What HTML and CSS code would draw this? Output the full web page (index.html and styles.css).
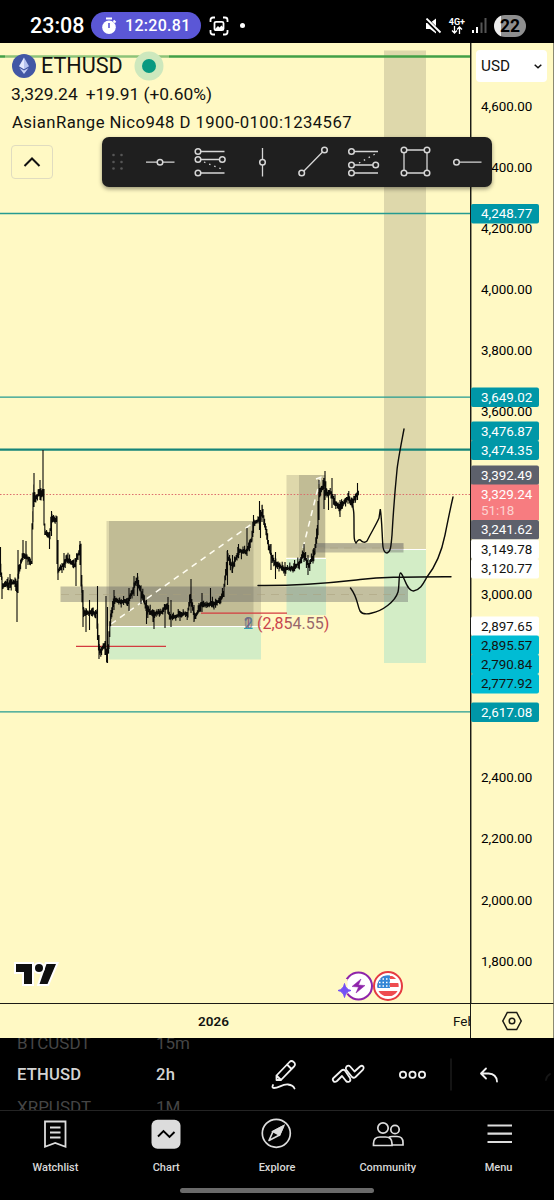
FILE: index.html
```html
<!DOCTYPE html>
<html lang="en">

<head>
  <meta charset="UTF-8">
  <meta name="viewport" content="width=device-width, initial-scale=1.0">
  <title>ETHUSD Chart</title>
  <link rel="stylesheet" href="styles.css">
</head>

<body>
  <div class="app">
    <header class="status">
      <span class="clock">23:08</span>
      <div class="timer">
        <svg width="16" height="18" viewBox="0 0 16 18">
          <circle cx="8" cy="10.3" r="6.8" fill="#fff" />
          <path d="M5 1.5h6M12.5 3.5l2 2" stroke="#fff" stroke-width="2" />
          <path d="M8 6v5" stroke="#5b57d6" stroke-width="1.6" />
        </svg>
        <span>12:20.81</span>
      </div>
      <svg class="shot" width="20" height="20" viewBox="0 0 20 20" fill="none" stroke="#fff" stroke-width="1.8">
        <path d="M1.5 6V4q0-2.500 2.500-2.500h2M14 1.500h2q2.500 0 2.500 2.500v2M18.500 14v2q0 2.500-2.500 2.500h-2M6 18.500H4q-2.500 0-2.500-2.500v-2" />
        <rect x="5.500" y="5.800" width="9" height="8.400" rx="1.500" />
        <path d="M6 13l3-3 1.500 1.500 2-2L14 11v3H6z" fill="#fff" stroke="none" />
      </svg>
      <i class="note"></i>
      <div class="signals">
        <svg width="17" height="16" viewBox="0 0 17 16">
          <path d="M1 5h4l6-4.500v15L5 11H1z" fill="#fff" />
          <path d="M1 1l14 14" stroke="#000" stroke-width="4" />
          <path d="M1.500 .5l14 14" stroke="#fff" stroke-width="1.800" />
        </svg>
        <div class="net">
          <span>4G+</span>
          <svg width="12" height="8" viewBox="0 0 12 8" fill="none" stroke="#fff" stroke-width="1.300">
            <path d="M3.500 0v6.500M1 4.500l2.500 2.500L6 4.500M8.500 8V1.500M6 3.500L8.500 1 11 3.500" />
          </svg>
        </div>
        <svg width="15" height="15" viewBox="0 0 15 15">
          <path d="M0 12h2v3H0zM4 9h2v6H4z" fill="#fff" />
          <path d="M8.500 4.500h2V15h-2zM12.500 0h2v15h-2z" fill="#555" />
        </svg>
        <span class="battery">22</span>
      </div>
    </header>

    <main class="chart">
      <svg class="pane" width="470" height="960" viewBox="0 43 470 960">
        <!-- zones -->
        <g class="zone">
          <rect x="384" y="50.500" width="42" height="498.500" opacity=".14" />
          <rect x="106.500" y="521" width="147" height="105" opacity=".14" />
          <rect x="109" y="521" width="152" height="105" opacity=".14" />
          <rect x="286.500" y="475" width="39" height="82.500" opacity=".14" />
          <rect x="299" y="475" width="26" height="82.500" opacity=".14" />
        </g>
        <g class="zone-green">
          <rect x="384" y="550" width="42" height="113" />
          <rect x="109" y="627" width="152" height="32.500" />
          <rect x="286.500" y="559" width="39.500" height="56" />
        </g>
        <g class="zone-edge">
          <path d="M384 549.500h42M109 626.500h152M286 558.500h40" />
        </g>
        <rect class="band" x="60.500" y="586.500" width="347.500" height="15.500" />
        <rect class="band" x="315.500" y="543" width="88" height="9.500" />
        <rect class="band light" x="315.500" y="543.500" width="88" height="5" />
        <path class="mid" d="M61 594.500h347M316 548h88" />

        <!-- levels -->
        <path class="level-green" d="M0 56.500h5M169 56.500h301" />
        <path class="level-green faded" d="M5 56.500h164" />
        <path class="level" d="M0 213.500h470M0 397.200h470M0 711.800h470" />
        <path class="level bold" d="M0 449.700h470" />
        <path class="last" d="M0 494.500h470" />
        <path class="trend" d="M111 624L256 521M303 548L321 476M316 479l8-3" />

        <path class="stop" d="M76 646.300h90M201 613.200h86" />
        <path id="bars" class="bars" />

        <!-- freehand -->
        <g class="pen">
          <path d="M258 585.500C310 586 337 582 360 579.500S400 577 451 576.700" />
          <path d="M352 502C354 512 354 512 354 525S354 541 356 543Q359 538 361 540.500S364 544 367 541C372 531 376 525 379 518L380.300 509C382 520 382 536 383 547Q384 553 387 553C391 552 391 545 392 535C394 500 396 480 397 470S402 440 404 429" />
          <path d="M350.500 588C358 598 357 605 360 611Q363 615.500 372 613C382 611 395 602 398 592C399.500 587 398.500 573 400.500 573C404 574 406 591 413.500 591C421 590 424 582 427 577C438 563 443 545 445 535S450 510 453 497" />
        </g>
        <g class="ratio">
          <text x="244" y="628.500" fill="#3f7fa8">2</text>
          <text x="243.500" y="628.500" fill="#8a5277" opacity=".8">1</text>
          <text x="244" y="628.500" fill="#707483" opacity=".7">0</text>
          <path d="M244 628.500h8" stroke="#2e9fb5" />
          <text x="257" y="628.500" fill="url(#ratioFill)">(2,854.55)</text>
        </g>
        <defs>
          <linearGradient id="ratioFill">
            <stop offset="0" stop-color="#c9414b" />
            <stop offset=".4" stop-color="#c9414b" />
            <stop offset=".46" stop-color="#98666b" />
            <stop offset=".9" stop-color="#98666b" />
            <stop offset=".95" stop-color="#c9414b" />
          </linearGradient>
        </defs>

        <!-- logo -->
        <g class="tv" id="tv">
          <path d="M16 964h16v20h-8v-12h-8zM46.500 964H56l-8.500 20h-8z" />
          <circle cx="39" cy="968" r="4" />
        </g>

        <!-- events -->
        <circle cx="358.500" cy="986" r="13.500" fill="#fff" stroke="#8e24aa" stroke-width="2" />
        <path d="M345 979v15" stroke="#fff9c4" stroke-width="5" />
        <path d="M361 979l-9 7.500 6.500.5-2.500 6 9-7.500-6.500-.5z" fill="#8e24aa" stroke="#8e24aa" stroke-width=".5" stroke-linejoin="round" />
        <path d="M344.500 983.500q1 6 6.500 7-5.500 1-6.500 7-1-6-6.500-7 5.500-1 6.500-7z" fill="#7451f5" stroke="#7451f5" />
        <circle cx="388" cy="986" r="14" fill="#fff" stroke="#e53b41" stroke-width="2" />
        <clipPath id="flag"><circle cx="388" cy="986" r="10.700" /></clipPath>
        <g clip-path="url(#flag)">
          <path d="M377 976h22v3h-22zM377 983h22v4h-22zM377 991h22v5h-22z" fill="#ee4c50" />
          <path d="M377 975h13v13h-13z" fill="#3486d6" />
          <path d="M379 979h11M379 982.500h11M379 986h11" stroke="#fff" stroke-width="1.400" stroke-dasharray="1.500 2" />
        </g>
      </svg>

      <svg class="scale" id="scale" width="84" height="960" viewBox="470 43 84 960"></svg>

      <div class="times">
        <span class="year">2026</span>
        <span class="month">Feb</span>
      </div>
      <div class="gear">
        <svg width="22" height="20" viewBox="0 0 22 20" fill="none" stroke="#1a1a14" stroke-width="1.500">
          <path d="M6.300 1.500h9.400l4.500 8.500-4.500 8.500H6.300L1.800 10z" />
          <circle cx="11" cy="10" r="2.800" />
        </svg>
      </div>

      <div class="legend">
        <div class="title">
          <svg width="24" height="24" viewBox="0 0 24 24">
            <circle cx="12" cy="12" r="12" fill="#4257a5" />
            <path d="M12 3.500l5 8.700-5 3z" fill="#b7c4f0" />
            <path d="M12 3.500L7 12.200l5 3z" fill="#e2e8ff" />
            <path d="M7.500 14l4.500 6 4.500-6-4.500 2.500z" fill="#c5d0f5" />
          </svg>
          <h1>ETHUSD</h1>
          <i class="live"></i>
        </div>
        <p class="price"><span>3,329.24</span><span>+19.91 (+0.60%)</span></p>
        <p class="study">AsianRange Nico948 D 1900-0100:1234567</p>
        <button class="fold">
          <svg width="18" height="12" viewBox="0 0 18 12" fill="none" stroke="#111" stroke-width="2">
            <path d="M1.500 10L9 2.500l7.500 7.500" />
          </svg>
        </button>
      </div>

      <div class="currency">
        <span>USD</span>
        <svg width="8" height="5" viewBox="0 0 8 5" fill="none" stroke="#111" stroke-width="1.500">
          <path d="M.7.700L4 3.800 7.300.7" />
        </svg>
      </div>

      <div class="tools">
        <svg width="390" height="50" viewBox="102 137 390 50">
          <g fill="#565656">
            <circle cx="113.500" cy="155" r="1.300" /><circle cx="121.500" cy="155" r="1.300" />
            <circle cx="113.500" cy="162" r="1.300" /><circle cx="121.500" cy="162" r="1.300" />
            <circle cx="113.500" cy="168.500" r="1.300" /><circle cx="121.500" cy="168.500" r="1.300" />
          </g>
          <g class="tool">
            <path d="M146 162.200h28.500M198 151.500h26.500M198 159.500h24M198 173h26.500M262.500 148v28.500M302 173l22.500-23M352 151.500h26M352 165h23M352 173h26M404 150h23v23h-23zM456.500 162.200h25" />
            <path stroke-dasharray="1.500 4" d="M204 162l20 8M359 163l18-10" />
            <circle cx="160" cy="162.200" r="2.800" />
            <circle cx="198" cy="151.500" r="2.800" />
            <circle cx="198" cy="159.500" r="2.800" />
            <circle cx="222.300" cy="159.500" r="2.800" />
            <circle cx="198" cy="173" r="2.800" />
            <circle cx="262.500" cy="162.200" r="2.800" />
            <circle cx="301.700" cy="173" r="2.800" />
            <circle cx="324.500" cy="150" r="2.800" />
            <circle cx="351.500" cy="151.500" r="2.800" />
            <circle cx="351.500" cy="165" r="2.800" />
            <circle cx="375.700" cy="165" r="2.800" />
            <circle cx="351.500" cy="173" r="2.800" />
            <circle cx="404" cy="150" r="2.800" />
            <circle cx="427" cy="150" r="2.800" />
            <circle cx="404" cy="173" r="2.800" />
            <circle cx="427" cy="173" r="2.800" />
            <circle cx="456.500" cy="162.200" r="2.800" />
          </g>
        </svg>
      </div>
    </main>

    <section class="picker">
      <ul class="wheel symbols">
        <li>BTCUSDT</li>
        <li class="on">ETHUSD</li>
        <li>XRPUSDT</li>
      </ul>
      <ul class="wheel frames">
        <li>15m</li>
        <li class="on">2h</li>
        <li>1M</li>
      </ul>
      <svg class="actions" width="284" height="72" viewBox="270 1038 284 72">
        <g fill="none" stroke="#f2f2f2" stroke-width="1.800" stroke-linejoin="round" stroke-linecap="round">
          <path d="M276.500 1080v-4.500l13-13.500q2-2 4.300.2t.2 4.300l-13 13.500zM287 1064.500l4.500 4.500M276.500 1075.500l4.500 4.500" />
          <path d="M273 1085q-1.500 3 1 3c5 0 8-4 14-3.500q5 .5 6.500 4" />
          <path d="M333.500 1078l8-7.500q1.800-1.500 3.500 0l5 7.500q1 2.500-.5 3.500-2 1-3.500-.5l-4-5-5 5q-2 1.500-3.500.2-1.500-1.700 0-3.200z" />
          <path d="M346.500 1066.500q2-1.800 3.700 0l4.300 5 5.500-5q2-1.500 3.300 0 1 1.700-.3 3.200l-7.500 7.300q-1.800 1.500-3.500 0l-5.800-7.300q-1-1.700.3-3.200z" />
          <circle cx="403" cy="1074.700" r="3.100" />
          <circle cx="412.500" cy="1074.700" r="3.100" />
          <circle cx="422" cy="1074.700" r="3.100" />
          <path d="M486 1068.500l-5 5 5 5M481.500 1073.500h7q8 .5 8.500 8" />
          <path d="M546 1080q.5-4 4-6" stroke="#161616" />
        </g>
        <path d="M451 1058.500v32" stroke="#292929" />
      </svg>
    </section>

    <nav class="tabs">
      <a class="tab">
        <svg width="32" height="32" viewBox="0 0 32 32" fill="none" stroke="#dcdcdc" stroke-width="1.800">
          <path d="M6 3.500h20.500v25.300L16.200 25 6 28.800zM11 9.500h10.500M11 14.500h10.500M11 19.500h10.500" />
        </svg>
        <span>Watchlist</span>
      </a>
      <a class="tab">
        <svg width="32" height="32" viewBox="0 0 32 32">
          <rect x="1.500" y="1.800" width="29" height="29" rx="6" fill="#dcdcdc" />
          <path d="M8 18.500l5.500-5.500 6 6 5-5" fill="none" stroke="#000" stroke-width="1.900" />
        </svg>
        <span>Chart</span>
      </a>
      <a class="tab">
        <svg width="32" height="32" viewBox="0 0 32 32" fill="none" stroke="#dcdcdc" stroke-width="1.700">
          <circle cx="15.300" cy="15.300" r="14" />
          <path d="M22.500 8l-10.500 5.500L8 22.500l10.500-5.500z" stroke-linejoin="round" />
          <path d="M22.500 8l-10.500 5.500 6.500 3.500z" fill="#dcdcdc" />
        </svg>
        <span>Explore</span>
      </a>
      <a class="tab">
        <svg width="32" height="32" viewBox="0 0 32 32" fill="none" stroke="#dcdcdc" stroke-width="1.700">
          <circle cx="11" cy="10" r="5.200" />
          <circle cx="23" cy="11.500" r="4.200" />
          <path d="M1.500 27.500v-2q0-6.500 6.500-6.500h5.500q6.500 0 6.500 6.500v2zM17 19.200q1-.7 3-.7h5q6 0 6 6v2.500h-10.500" />
        </svg>
        <span>Community</span>
      </a>
      <a class="tab">
        <svg width="32" height="32" viewBox="0 0 32 32" stroke="#dcdcdc" stroke-width="2.200">
          <path d="M4.500 7.500h24.500M4.500 15.700h24.500M4.500 24h24.500" />
        </svg>
        <span>Menu</span>
      </a>
    </nav>
    <i class="home"></i>
  </div>

  <script src="chart.js"></script>
</body>

</html>
```
FILE: styles.css
```css
* {
  margin: 0;
  padding: 0;
  box-sizing: border-box;
}

body {
  background: #000;
  font-family: Roboto, "Liberation Sans", sans-serif;
  color: #131310;
}

svg {
  display: block;
  flex-shrink: 0;
}

ul {
  list-style: none;
}

.app {
  width: 554px;
  height: 1200px;
  overflow: hidden;
  position: relative;
  display: flex;
  flex-direction: column;
}

/* status bar */
.status {
  height: 43px;
  padding: 8px 28px 0 30px;
  display: flex;
  align-items: center;
  color: #fff;
}

.clock {
  width: 61px;
  font-size: 21.5px;
  font-weight: 500;
}

.timer {
  width: 110px;
  height: 27px;
  border-radius: 14px;
  background: #5b57d6;
  display: flex;
  align-items: center;
  gap: 8px;
  padding-left: 10px;
  font-size: 16px;
  font-weight: 500;
  letter-spacing: 0.3px;
}

.shot {
  margin-left: 8px;
}

.note {
  width: 5px;
  height: 5px;
  border-radius: 50%;
  background: #fff;
  margin-left: 11px;
}

.signals {
  margin-left: auto;
  display: flex;
  align-items: center;
  gap: 7px;
}

.net {
  display: flex;
  flex-direction: column;
  align-items: center;
  font-size: 9px;
  line-height: 8px;
  font-weight: 700;
}

.battery {
  width: 32px;
  height: 22px;
  border-radius: 11px;
  background: linear-gradient(90deg, #eee 7px, #8f8f8f 7px);
  color: #000;
  font-size: 17.5px;
  line-height: 22px;
  font-weight: 700;
  text-align: center;
}

/* chart */
.chart {
  position: relative;
  height: 995px;
  background: #fff9c4;
  display: grid;
  grid-template-columns: 470px 84px;
  grid-template-rows: 960px 35px;
}

.zone {
  fill: #141414;
}

.zone-green {
  fill: #d3edc6;
}

.zone-edge {
  stroke: #fff;
  stroke-width: 1.2;
}

.band {
  fill: #5a5a5e;
  opacity: 0.36;
}

.band.light {
  opacity: 0.15;
}

.mid {
  stroke: #aaa07c;
  stroke-dasharray: 8 6;
  opacity: 0.5;
}

.level {
  fill: none;
  stroke: #259b91;
  stroke-width: 1.3;
}

.level.bold {
  stroke: #168579;
  stroke-width: 2.2;
}

.level-green {
  stroke: #43a047;
  stroke-width: 2.6;
}

.level-green.faded {
  opacity: 0.6;
}

.last {
  stroke: #dc6b6b;
  stroke-width: 1.1;
  stroke-dasharray: 1.5 1.8;
}

.trend {
  fill: none;
  stroke: #fffdf0;
  stroke-width: 1.5;
  stroke-dasharray: 6 5;
}

.stop {
  stroke: #d33b3f;
  stroke-width: 1.2;
}

.bars {
  fill: none;
  stroke: #0a0a08;
  stroke-width: 1.1;
}

.pen {
  fill: none;
  stroke: #0c0c0a;
  stroke-width: 1.4;
  stroke-linecap: round;
}

.ratio {
  font-size: 16px;
}

.tv {
  fill: #101010;
  stroke: #fff;
  stroke-width: 4;
  paint-order: stroke;
}

.scale {
  font-size: 13.4px;
}

.axis-line {
  stroke: #1c1c16;
  stroke-width: 1.5;
}

.axis-end {
  stroke: #8b8972;
}

.times,
.gear {
  border-top: 1px solid #1c1c16;
}

.times {
  display: flex;
  justify-content: space-between;
  align-items: center;
  overflow: hidden;
  font-size: 13.5px;
}

.year {
  margin-left: 198px;
  font-weight: 600;
}

.month {
  width: 17px;
}

.gear {
  border-left: 1px solid #1c1c16;
  border-right: 1px solid #8b8972;
  display: flex;
  align-items: center;
  justify-content: center;
}

/* legend lies over the plot */
.legend {
  position: absolute;
  left: 12px;
  top: 9px;
}

.title {
  display: flex;
  align-items: center;
  height: 27px;
}

.title h1 {
  margin-left: 5px;
  font-size: 21.6px;
  font-weight: 400;
}

.live {
  width: 14px;
  height: 14px;
  margin-left: 19px;
  border-radius: 50%;
  background: #089981;
  box-shadow: 0 0 0 7.500px #cde8bd;
}

.price {
  margin: 4px 0 0 -1px;
  display: flex;
  gap: 8px;
  font-size: 17.4px;
  line-height: 22px;
}

.study {
  margin-top: 7px;
  font-size: 16.7px;
  letter-spacing: 0.43px;
  line-height: 22px;
  white-space: nowrap;
}

.fold {
  width: 42px;
  height: 34px;
  margin: 11px 0 0 -1px;
  background: none;
  border: 1px solid #e0dcc0;
  border-radius: 4px;
  display: flex;
  align-items: center;
  justify-content: center;
}

.currency {
  position: absolute;
  left: 476px;
  top: 7px;
  width: 71px;
  height: 32px;
  border-radius: 4px;
  background: #fff;
  padding: 0 5px;
  display: flex;
  align-items: center;
  justify-content: space-between;
  font-size: 15.3px;
}

.tools {
  position: absolute;
  left: 102px;
  top: 94px;
  width: 390px;
  height: 50px;
  border-radius: 7px;
  background: #1f1f1f;
  box-shadow: 0 2px 4px rgba(0, 0, 0, 0.4);
}

.tool {
  fill: none;
  stroke: #d6d6d6;
  stroke-width: 1.3;
}

.tool circle {
  fill: #1f1f1f;
  stroke-width: 1.5;
}

/* symbol and interval wheels */
.picker {
  height: 72px;
  padding-left: 17px;
  display: flex;
  overflow: hidden;
}

.wheel {
  height: 96px;
  margin-top: -11px;
  font-size: 17px;
}

.wheel li {
  height: 32px;
  line-height: 32px;
  color: #454545;
}

.wheel .on {
  font-size: 16.6px;
  font-weight: 500;
  letter-spacing: 0.2px;
  color: #d4d4d4;
}

.symbols {
  width: 139px;
}

.frames {
  width: 114px;
}

/* tab bar */
.tabs {
  height: 90px;
  border-top: 1px solid #242424;
  display: flex;
}

.tab {
  flex: 1;
  padding-top: 7px;
  display: flex;
  flex-direction: column;
  align-items: center;
  gap: 11px;
  font-size: 11px;
  font-weight: 500;
  color: #d8d8d8;
}

.home {
  position: absolute;
  left: 180px;
  bottom: 7px;
  width: 194px;
  height: 5.500px;
  border-radius: 3px;
  background: #6a6a6a;
}
```
FILE: chart.js
```js
// x, y of the middle of the price bars
var track = [
  [0, 560], [2, 578], [3, 587], [8, 584], [15, 582], [17, 590], [19, 572], [23, 556], [28, 558], [32, 563],
  [33, 518], [34, 488], [35, 498], [41, 493], [44, 495], [45, 532], [50, 537], [52, 518], [57, 520], [58, 572],
  [62, 567], [68, 559], [75, 566], [78, 556], [81, 549], [82, 590], [84, 613], [90, 613], [97, 613],
  [98.500, 637], [100, 652], [105, 646], [107, 656], [109, 647], [111, 617], [114, 601], [128, 602],
  [133, 591], [137, 580], [142, 593], [147, 609], [153, 614], [162, 612], [167, 605], [171, 618], [180, 615],
  [188, 613], [191, 597], [195, 618], [202, 604], [210, 605], [220, 601], [224, 593], [228, 556], [233, 567],
  [239, 551], [247, 552], [252, 539], [254, 523], [259, 520], [263, 512], [266, 528], [269, 547], [275, 564],
  [285, 569], [293, 568], [300, 563], [304, 553], [309, 566], [315, 553], [318, 530], [319, 495], [325, 483],
  [327, 493], [332, 493], [335, 501], [340, 509], [348, 498], [353, 503], [356, 496], [359, 492]
];

// long wicks: x, high, low
var wicks = [
  [0.500, 547, 575], [2, 578, 599], [10, 574, 588], [17, 582, 622], [18, 550, 593], [23, 540, 560], [26, 541, 569],
  [34, 473, 507], [40, 480, 500], [43, 450, 495], [49.500, 532, 549], [51.500, 511, 536], [58, 540, 580],
  [64, 553, 567], [76, 560, 586], [80, 541, 565], [83, 590, 627], [86, 608, 632], [89.500, 600, 630],
  [97.500, 586, 640], [99, 635, 659], [106, 596, 650], [107.500, 607, 663], [114, 590, 610], [129, 588, 611],
  [134, 576, 596], [137.500, 573, 596], [141, 586, 604], [146.500, 600, 624], [154, 610, 629], [165, 605, 628],
  [168, 597, 614], [171, 600, 627], [191, 579, 613], [194, 605, 622], [202, 593, 612], [210.500, 588, 605],
  [227.500, 550, 585], [232.500, 555, 573], [238.500, 544, 556], [247, 528, 556], [253.500, 515, 533],
  [259.500, 501, 530], [260.500, 510, 538], [262, 505, 522], [271, 544, 570], [275.500, 552, 579], [285, 562, 576],
  [304, 544, 562], [308, 555, 575], [319, 480, 520], [325, 471, 500], [324, 490, 509], [332, 478, 508],
  [340, 500, 517], [357.500, 483, 500], [328.500, 490, 510], [335, 494, 506]
];

var d = '';
var seed = 11;

// repeatable noise, 0 to 1
function noise() {
  seed = (seed * 16807) % 2147483647;
  return seed / 2147483647;
}

for (var i = 0; i < track.length - 1; i++) {
  var a = track[i];
  var b = track[i + 1];
  var last = a[1];
  for (var x = a[0]; x < b[0]; x += 0.800) {
    var y = a[1] + (b[1] - a[1]) * Math.min(1, (x + 0.800 - a[0]) / (b[0] - a[0]));
    var up = 1 + noise() * noise() * 7;
    var down = 1 + noise() * noise() * 7;
    d += 'M' + x.toFixed(1) + ' ' + (Math.min(last, y) - up).toFixed(1);
    d += 'V' + (Math.max(last, y) + down).toFixed(1);
    last = y;
  }
}
wicks.forEach(function (w) {
  d += 'M' + w[0] + ' ' + w[1] + 'V' + w[2];
});
document.getElementById('bars').setAttribute('d', d);

// price scale
var scale = document.getElementById('scale');
var html = '<path class="axis-line" d="M470.700 43v960"/><path class="axis-end" d="M553.500 43v960"/>';
[4600, 4400, 4200, 4000, 3800, 3600, 3000, 2400, 2200, 2000, 1800].forEach(function (p) {
  var y = 110.500 + (4600 - p) * 0.3054;
  html += '<text x="481" y="' + y + '">' + p.toLocaleString('en-US') + '.00</text>';
});

// label, centre, background, colour
var tags = [
  ['4,248.77', 213.500, '#0097a7', '#fff'],
  ['3,649.02', 397, '#0097a7', '#fff'],
  ['3,476.87', 431, '#0097a7', '#fff'],
  ['3,474.35', 450, '#0097a7', '#fff'],
  ['3,392.49', 475, '#5d606b', '#fff'],
  ['3,241.62', 529.500, '#5d606b', '#fff'],
  ['3,149.78', 549, '#fff', '#131310'],
  ['3,120.77', 568.500, '#fff', '#131310'],
  ['2,897.65', 626, '#fff', '#131310'],
  ['2,895.57', 645, '#00bcd4', '#131310'],
  ['2,790.84', 664, '#00bcd4', '#131310'],
  ['2,777.92', 683.500, '#00bcd4', '#131310'],
  ['2,617.08', 712, '#0097a7', '#fff']
];
tags.forEach(function (t) {
  html += '<rect x="471" y="' + (t[1] - 9.500) + '" width="68" height="19.500" rx="2" fill="' + t[2] + '"/>';
  html += '<text x="481" y="' + (t[1] + 4.700) + '" fill="' + t[3] + '">' + t[0] + '</text>';
});
html += '<rect x="471" y="484.500" width="68" height="35.500" fill="#f77c80"/>';
html += '<text x="481" y="499" fill="#fff">3,329.24</text>';
html += '<text x="481" y="515" fill="#fcd3d0">51:18</text>';
scale.innerHTML = html;
```
